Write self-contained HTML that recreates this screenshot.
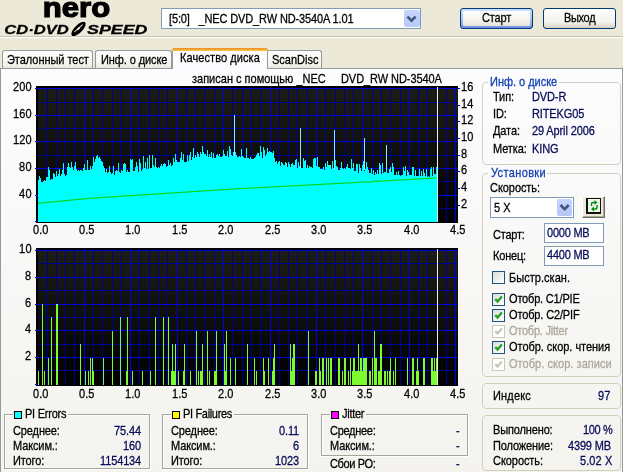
<!DOCTYPE html>
<html lang="ru"><head><meta charset="utf-8"><title>Nero CD-DVD Speed</title>
<style>
html,body{margin:0;padding:0;background:#ece9d8;}
body{width:623px;height:472px;overflow:hidden;font-family:"Liberation Sans",sans-serif;font-size:11px;color:#000;}
#win{position:relative;width:623px;height:472px;overflow:hidden;background:#ece9d8;}
.abs{position:absolute;}
.t{position:absolute;white-space:nowrap;line-height:13px;height:13px;font-size:11px;transform:scaleY(1.1);transform-origin:0 10.3px;will-change:transform;-webkit-text-stroke:0.25px currentColor;}
.nv{color:#080c58;}
.bl{color:#1440b4;}
.gy{color:#aca899;}
#page{position:absolute;left:0px;top:68px;width:621px;height:410px;border:1px solid #919b9c;background:linear-gradient(#fcfcfe,#f4f3ee);}
.tab{position:absolute;top:50px;height:18px;border:1px solid #919b9c;border-bottom:none;border-radius:3px 3px 0 0;background:linear-gradient(#ffffff,#f3f3ec 80%,#e8e7dc);box-sizing:border-box;}
.tab.act{top:48px;height:21px;background:#fcfcfe;border-top:none;}
.tab.act:before{content:"";position:absolute;left:-1px;right:-1px;top:0;height:3px;border-radius:3px 3px 0 0;background:linear-gradient(#e68b2c,#ffc73c);}
.gb{position:absolute;border:1px solid #d0d0bf;border-radius:4px;box-sizing:border-box;}
.gbt{position:absolute;background:#f9f9fa;padding:0 2px;}
.eb{position:absolute;border:1px solid #a5a59a;box-sizing:border-box;box-shadow:1px 1px 0 #fff, inset 1px 1px 0 #fff;}
.inp{position:absolute;border:1px solid #7f9db9;background:#fff;box-sizing:border-box;}
.btn{position:absolute;box-sizing:border-box;border:1px solid #003c74;border-radius:3px;background:linear-gradient(#ffffff,#f3f2ec 70%,#d6d0c5);}
.cb{position:absolute;width:13px;height:13px;box-sizing:border-box;border:1px solid #1c5180;background:linear-gradient(135deg,#dcdcd7,#fff);}
.cb.dis{border-color:#cac8bb;background:#fff;}
.sq{position:absolute;width:8px;height:8px;box-sizing:border-box;border:1px solid #000;}

</style></head>
<body>
<div id="win">
<!-- logo -->
<svg class="abs" style="left:0;top:0;will-change:transform" width="160" height="40" viewBox="0 0 160 40" font-family="Liberation Sans, sans-serif" font-weight="bold">
<text x="42.8" y="17.3" font-size="27.3" textLength="67.4" lengthAdjust="spacingAndGlyphs" stroke="#000" stroke-width="1.2">nero</text>
<g font-style="italic" font-size="12.8" stroke="#000" stroke-width="0.3">
<text x="4.3" y="33.7" textLength="64.5" lengthAdjust="spacingAndGlyphs">CD·DVD</text>
<text x="87" y="33.7" textLength="60.5" lengthAdjust="spacingAndGlyphs">SPEED</text>
</g>
<ellipse cx="78.5" cy="28.9" rx="9.4" ry="3.9" transform="rotate(-45 78.5 28.9)" fill="#000"/>
<path d="M74.2 32.2 L82.6 24.6" stroke="#d8d5c6" stroke-width="1.1" fill="none"/>
<ellipse cx="78.6" cy="28.6" rx="2" ry="0.9" transform="rotate(-45 78.6 28.6)" fill="#ece9d8"/>
</svg>
<!-- top controls -->
<div class="inp" style="left:161px;top:8px;width:260px;height:21px;"></div>

<div class="abs" style="left:404px;top:10px;width:16px;height:17px;background:linear-gradient(#c6d5fd,#b9cafa);border-radius:2px;"></div>
<svg class="abs" style="left:404px;top:10px" width="16" height="17"><path d="M3.4 6.6 L7.5 10.7 L11.6 6.6" fill="none" stroke="#435782" stroke-width="2.7"/></svg>
<div class="btn" style="left:460px;top:8px;width:73px;height:21px;background:linear-gradient(#cfe0ff,#a6bdf3 60%,#6f8bea);"></div>
<div class="abs" style="left:463px;top:11px;width:67px;height:15px;border-radius:1px;background:linear-gradient(#ffffff,#f4f3ee 60%,#e6e3d8);"></div>

<div class="btn" style="left:543px;top:8px;width:73px;height:21px;"></div>

<div class="abs" style="left:0;top:36px;width:623px;height:1px;background:#c5c2b2;"></div>
<div class="abs" style="left:0;top:37px;width:623px;height:1px;background:#fff;"></div>
<!-- tab page -->
<div id="page"></div>
<div class="tab" style="left:2px;width:91px;"></div>
<div class="tab" style="left:95px;width:77px;"></div>
<div class="tab" style="left:266px;width:56px;"></div>
<div class="tab act" style="left:172px;width:96px;"></div>





<svg class="abs" style="left:0;top:0" width="623" height="472" viewBox="0 0 623 472">
<defs><linearGradient id="g1" x1="0" y1="0" x2="0" y2="1"><stop offset="0" stop-color="#1d1d18"/><stop offset="1" stop-color="#000"/></linearGradient></defs>
<rect x="36" y="86" width="422" height="137" fill="#000"/>
<rect x="38" y="88" width="420" height="134" fill="url(#g1)"/>
<path d="M47.5,88V222M56.5,88V222M65.5,88V222M74.5,88V222M93.5,88V222M102.5,88V222M112.5,88V222M121.5,88V222M139.5,88V222M149.5,88V222M158.5,88V222M167.5,88V222M186.5,88V222M195.5,88V222M204.5,88V222M214.5,88V222M232.5,88V222M242.5,88V222M251.5,88V222M260.5,88V222M279.5,88V222M288.5,88V222M297.5,88V222M307.5,88V222M325.5,88V222M335.5,88V222M344.5,88V222M353.5,88V222M372.5,88V222M381.5,88V222M390.5,88V222M400.5,88V222M418.5,88V222M427.5,88V222M437.5,88V222M446.5,88V222M38,102.5H458M38,128.5H458M38,155.5H458M38,181.5H458M38,208.5H458" stroke="#000090" stroke-width="1" fill="none"/>
<path d="M84.5,88V222M130.5,88V222M177.5,88V222M223.5,88V222M270.5,88V222M316.5,88V222M362.5,88V222M409.5,88V222M455.5,88V222M38,88.5H458M38,115.5H458M38,141.5H458M38,168.5H458M38,195.5H458" stroke="#0000dc" stroke-width="1" fill="none"/>
<rect x="234" y="115" width="1" height="55" fill="#8ef"/><rect x="300" y="128" width="1" height="42" fill="#8ef"/><rect x="334" y="130" width="1" height="40" fill="#8ef"/><rect x="364" y="138" width="1" height="32" fill="#8ef"/><rect x="386" y="145" width="1" height="25" fill="#8ef"/>
<path d="M38,222.2V180h1V176h1V178h1V182h1V182h1V181h1V180h1V181h1V177h1V177h1V167h1V170h1V180h1V179h1V179h1V173h1V174h1V177h1V171h1V176h1V174h1V169h1V176h1V174h1V170h1V163h1V174h1V176h1V175h1V167h1V163h1V167h1V168h1V162h1V167h1V170h1V166h1V162h1V169h1V171h1V170h1V171h1V170h1V170h1V171h1V168h1V164h1V170h1V170h1V160h1V170h1V170h1V166h1V169h1V166h1V157h1V162h1V159h1V156h1V155h1V158h1V157h1V159h1V161h1V162h1V166h1V168h1V172h1V169h1V173h1V172h1V166h1V172h1V174h1V173h1V166h1V175h1V171h1V170h1V171h1V163h1V172h1V173h1V170h1V171h1V164h1V163h1V164h1V172h1V170h1V172h1V172h1V159h1V160h1V159h1V171h1V171h1V167h1V162h1V166h1V172h1V159h1V163h1V171h1V169h1V156h1V168h1V162h1V169h1V158h1V169h1V155h1V168h1V168h1V155h1V165h1V167h1V158h1V167h1V168h1V167h1V168h1V166h1V164h1V166h1V164h1V163h1V164h1V167h1V166h1V160h1V165h1V163h1V166h1V165h1V158h1V162h1V154h1V160h1V162h1V162h1V162h1V158h1V152h1V160h1V154h1V162h1V162h1V162h1V155h1V161h1V155h1V152h1V160h1V157h1V148h1V158h1V155h1V157h1V152h1V154h1V157h1V152h1V154h1V146h1V152h1V154h1V154h1V156h1V150h1V157h1V154h1V157h1V152h1V158h1V153h1V158h1V158h1V155h1V154h1V156h1V154h1V157h1V157h1V156h1V150h1V154h1V156h1V156h1V151h1V157h1V146h1V149h1V155h1V156h1V152h1V157h1V152h1V155h1V157h1V157h1V156h1V157h1V149h1V156h1V157h1V158h1V158h1V148h1V158h1V158h1V159h1V157h1V159h1V159h1V159h1V158h1V157h1V155h1V153h1V153h1V156h1V146h1V152h1V158h1V147h1V150h1V156h1V154h1V148h1V152h1V151h1V152h1V152h1V153h1V151h1V158h1V162h1V161h1V164h1V162h1V161h1V166h1V162h1V163h1V165h1V165h1V162h1V163h1V167h1V162h1V164h1V167h1V164h1V163h1V165h1V165h1V160h1V159h1V168h1V162h1V166h1V168h1V168h1V168h1V158h1V161h1V160h1V168h1V165h1V168h1V166h1V167h1V167h1V168h1V159h1V158h1V158h1V166h1V157h1V167h1V167h1V169h1V169h1V169h1V167h1V170h1V163h1V167h1V161h1V165h1V165h1V165h1V169h1V161h1V168h1V170h1V160h1V166h1V167h1V170h1V170h1V168h1V162h1V168h1V169h1V168h1V169h1V167h1V164h1V168h1V168h1V169h1V159h1V168h1V163h1V171h1V171h1V164h1V164h1V173h1V164h1V168h1V171h1V165h1V161h1V171h1V169h1V162h1V167h1V170h1V173h1V173h1V168h1V174h1V170h1V175h1V172h1V174h1V170h1V174h1V163h1V165h1V174h1V163h1V173h1V172h1V172h1V170h1V173h1V173h1V169h1V167h1V172h1V163h1V167h1V175h1V175h1V172h1V175h1V171h1V175h1V176h1V175h1V175h1V167h1V171h1V166h1V176h1V170h1V172h1V175h1V175h1V175h1V167h1V167h1V176h1V170h1V176h1V176h1V176h1V169h1V176h1V171h1V176h1V169h1V173h1V176h1V169h1V177h1V176h1V177h1V169h1V167h1V176h1V167h1V174h1V174h1V167h1V222.2Z" fill="#00ffff"/>
<path d="M38,203.3 L39,203.2 L40,203.1 L41,203.0 L42,202.9 L43,202.8 L44,202.7 L45,202.6 L46,202.5 L47,202.4 L48,202.3 L49,202.2 L50,202.1 L51,202.1 L52,202.0 L53,201.9 L54,201.8 L55,201.7 L56,201.6 L57,201.5 L58,201.4 L59,201.3 L60,201.2 L61,201.1 L62,201.0 L63,200.9 L64,200.8 L65,200.7 L66,200.6 L67,200.5 L68,200.4 L69,200.3 L70,200.2 L71,200.1 L72,200.0 L73,199.9 L74,199.8 L75,199.7 L76,199.6 L77,199.6 L78,199.5 L79,199.4 L80,199.3 L81,199.2 L82,199.1 L83,199.0 L84,198.9 L85,198.8 L86,198.7 L87,198.6 L88,198.5 L89,198.4 L90,198.3 L91,198.2 L92,198.2 L93,198.1 L94,198.0 L95,198.0 L96,197.9 L97,197.8 L98,197.8 L99,197.7 L100,197.6 L101,197.6 L102,197.5 L103,197.4 L104,197.4 L105,197.3 L106,197.2 L107,197.2 L108,197.1 L109,197.1 L110,197.0 L111,196.9 L112,196.9 L113,196.8 L114,196.7 L115,196.7 L116,196.6 L117,196.5 L118,196.5 L119,196.4 L120,196.3 L121,196.3 L122,196.2 L123,196.1 L124,196.1 L125,196.0 L126,195.9 L127,195.9 L128,195.8 L129,195.7 L130,195.7 L131,195.6 L132,195.5 L133,195.5 L134,195.4 L135,195.4 L136,195.3 L137,195.2 L138,195.2 L139,195.1 L140,195.0 L141,195.0 L142,194.9 L143,194.8 L144,194.8 L145,194.7 L146,194.6 L147,194.6 L148,194.5 L149,194.5 L150,194.4 L151,194.3 L152,194.3 L153,194.2 L154,194.1 L155,194.1 L156,194.0 L157,193.9 L158,193.9 L159,193.8 L160,193.7 L161,193.7 L162,193.6 L163,193.5 L164,193.5 L165,193.4 L166,193.4 L167,193.3 L168,193.2 L169,193.2 L170,193.1 L171,193.0 L172,193.0 L173,192.9 L174,192.8 L175,192.8 L176,192.7 L177,192.6 L178,192.6 L179,192.5 L180,192.4 L181,192.4 L182,192.3 L183,192.3 L184,192.2 L185,192.1 L186,192.1 L187,192.0 L188,191.9 L189,191.9 L190,191.8 L191,191.7 L192,191.7 L193,191.6 L194,191.5 L195,191.5 L196,191.4 L197,191.4 L198,191.3 L199,191.2 L200,191.2 L201,191.1 L202,191.0 L203,191.0 L204,190.9 L205,190.8 L206,190.8 L207,190.7 L208,190.6 L209,190.6 L210,190.5 L211,190.4 L212,190.4 L213,190.3 L214,190.3 L215,190.2 L216,190.1 L217,190.1 L218,190.0 L219,189.9 L220,189.9 L221,189.8 L222,189.7 L223,189.7 L224,189.6 L225,189.5 L226,189.5 L227,189.4 L228,189.4 L229,189.3 L230,189.2 L231,189.2 L232,189.1 L233,189.0 L234,189.0 L235,188.9 L236,188.8 L237,188.8 L238,188.7 L239,188.7 L240,188.6 L241,188.6 L242,188.5 L243,188.5 L244,188.4 L245,188.4 L246,188.3 L247,188.3 L248,188.2 L249,188.2 L250,188.1 L251,188.1 L252,188.0 L253,188.0 L254,187.9 L255,187.8 L256,187.8 L257,187.7 L258,187.7 L259,187.6 L260,187.6 L261,187.5 L262,187.5 L263,187.4 L264,187.4 L265,187.3 L266,187.3 L267,187.2 L268,187.2 L269,187.1 L270,187.1 L271,187.0 L272,186.9 L273,186.9 L274,186.8 L275,186.8 L276,186.7 L277,186.7 L278,186.6 L279,186.6 L280,186.5 L281,186.5 L282,186.4 L283,186.4 L284,186.3 L285,186.3 L286,186.2 L287,186.2 L288,186.1 L289,186.1 L290,186.0 L291,185.9 L292,185.9 L293,185.8 L294,185.8 L295,185.7 L296,185.7 L297,185.6 L298,185.6 L299,185.5 L300,185.5 L301,185.4 L302,185.4 L303,185.3 L304,185.3 L305,185.2 L306,185.2 L307,185.1 L308,185.1 L309,185.0 L310,184.9 L311,184.9 L312,184.8 L313,184.8 L314,184.7 L315,184.7 L316,184.6 L317,184.6 L318,184.5 L319,184.5 L320,184.4 L321,184.4 L322,184.3 L323,184.3 L324,184.2 L325,184.2 L326,184.1 L327,184.0 L328,184.0 L329,183.9 L330,183.9 L331,183.8 L332,183.8 L333,183.7 L334,183.7 L335,183.6 L336,183.6 L337,183.5 L338,183.5 L339,183.4 L340,183.4 L341,183.3 L342,183.3 L343,183.2 L344,183.2 L345,183.1 L346,183.0 L347,183.0 L348,182.9 L349,182.9 L350,182.8 L351,182.8 L352,182.7 L353,182.7 L354,182.6 L355,182.5 L356,182.5 L357,182.4 L358,182.4 L359,182.3 L360,182.3 L361,182.2 L362,182.1 L363,182.1 L364,182.0 L365,182.0 L366,181.9 L367,181.9 L368,182.2 L369,182.1 L370,182.2 L371,182.0 L372,181.7 L373,181.3 L374,181.2 L375,181.2 L376,181.8 L377,180.7 L378,181.3 L379,181.2 L380,181.1 L381,181.1 L382,181.0 L383,181.0 L384,180.9 L385,180.9 L386,180.8 L387,180.7 L388,180.7 L389,180.6 L390,180.6 L391,180.5 L392,180.5 L393,180.4 L394,180.4 L395,180.3 L396,180.2 L397,180.2 L398,180.1 L399,180.1 L400,180.0 L401,180.0 L402,179.9 L403,179.8 L404,179.8 L405,179.7 L406,179.7 L407,179.6 L408,179.6 L409,179.5 L410,179.5 L411,179.4 L412,179.3 L413,179.3 L414,179.2 L415,179.2 L416,179.1 L417,179.1 L418,179.0 L419,179.0 L420,178.9 L421,178.8 L422,178.8 L423,178.7 L424,178.7 L425,178.6 L426,178.6 L427,178.5 L428,178.4 L429,178.4 L430,178.3 L431,178.3 L432,178.2 L433,178.2 L434,178.1 L435,178.1 L436,178.0" fill="none" stroke="#00d820" stroke-width="1.2"/>
<rect x="437" y="87" width="1" height="135" fill="#f0f0e8"/>
<rect x="36" y="222" width="422" height="1" fill="#000"/>
<path d="M35,88.5H38M35,115.5H38M35,141.5H38M35,168.5H38M35,195.5H38M35,221.5H38" stroke="#0000dc" stroke-width="1" fill="none"/>
<path d="M457,88.5H460M457,105.5H460M457,121.5H460M457,138.5H460M457,155.5H460M457,171.5H460M457,188.5H460M457,205.5H460" stroke="#0000dc" stroke-width="1" fill="none"/>
<defs><linearGradient id="g2" x1="0" y1="0" x2="0" y2="1"><stop offset="0" stop-color="#1d1d18"/><stop offset="1" stop-color="#000"/></linearGradient></defs>
<rect x="36" y="248" width="422" height="138" fill="#000"/>
<rect x="38" y="250" width="420" height="135" fill="url(#g2)"/>
<path d="M47.5,250V385M56.5,250V385M65.5,250V385M74.5,250V385M93.5,250V385M102.5,250V385M112.5,250V385M121.5,250V385M139.5,250V385M149.5,250V385M158.5,250V385M167.5,250V385M186.5,250V385M195.5,250V385M204.5,250V385M214.5,250V385M232.5,250V385M242.5,250V385M251.5,250V385M260.5,250V385M279.5,250V385M288.5,250V385M297.5,250V385M307.5,250V385M325.5,250V385M335.5,250V385M344.5,250V385M353.5,250V385M372.5,250V385M381.5,250V385M390.5,250V385M400.5,250V385M418.5,250V385M427.5,250V385M437.5,250V385M446.5,250V385M38,263.5H458M38,290.5H458M38,317.5H458M38,344.5H458M38,370.5H458" stroke="#000090" stroke-width="1" fill="none"/>
<path d="M84.5,250V385M130.5,250V385M177.5,250V385M223.5,250V385M270.5,250V385M316.5,250V385M362.5,250V385M409.5,250V385M455.5,250V385M38,250.5H458M38,277.5H458M38,304.5H458M38,330.5H458M38,357.5H458" stroke="#0000dc" stroke-width="1" fill="none"/>
<path d="M38,385.0V371h1V385.0zM42,385.0V304h1V385.0zM44,385.0V371h1V385.0zM48,385.0V358h1V385.0zM51,385.0V317h1V385.0zM56,385.0V304h2V385.0zM80,385.0V344h1V385.0zM85,385.0V371h1V385.0zM88,385.0V371h1V385.0zM90,385.0V358h1V385.0zM92,385.0V358h1V385.0zM93,385.0V371h1V385.0zM103,385.0V358h1V385.0zM112,385.0V331h1V385.0zM120,385.0V317h1V385.0zM127,385.0V317h1V385.0zM126,385.0V371h2V385.0zM132,385.0V371h1V385.0zM142,385.0V371h1V385.0zM150,385.0V371h1V385.0zM155,385.0V317h1V385.0zM163,385.0V317h1V385.0zM168,385.0V317h1V385.0zM171,385.0V371h4V385.0zM172,385.0V358h1V385.0zM172,385.0V344h1V385.0zM175,385.0V344h1V385.0zM178,385.0V371h1V385.0zM184,385.0V344h1V385.0zM183,385.0V371h2V385.0zM190,385.0V371h1V385.0zM196,385.0V331h1V385.0zM198,385.0V371h1V385.0zM202,385.0V344h1V385.0zM200,385.0V371h3V385.0zM207,385.0V331h1V385.0zM209,385.0V371h1V385.0zM214,385.0V371h2V385.0zM216,385.0V331h1V385.0zM224,385.0V344h1V385.0zM224,385.0V371h2V385.0zM226,385.0V331h1V385.0zM230,385.0V358h1V385.0zM235,385.0V358h1V385.0zM247,385.0V344h1V385.0zM254,385.0V358h1V385.0zM256,385.0V371h1V385.0zM263,385.0V358h1V385.0zM263,385.0V371h2V385.0zM268,385.0V358h1V385.0zM272,385.0V371h3V385.0zM273,385.0V358h1V385.0zM274,385.0V344h1V385.0zM290,385.0V344h1V385.0zM293,385.0V344h2V385.0zM290,385.0V371h5V385.0zM292,385.0V358h3V385.0zM308,385.0V331h1V385.0zM315,385.0V371h2V385.0zM319,385.0V358h1V385.0zM320,385.0V371h1V385.0zM322,385.0V358h2V385.0zM326,385.0V358h1V385.0zM328,385.0V358h1V385.0zM330,385.0V358h2V385.0zM338,385.0V358h2V385.0zM342,385.0V371h1V385.0zM344,385.0V358h2V385.0zM348,385.0V371h1V385.0zM350,385.0V358h1V385.0zM352,385.0V371h3V385.0zM353,385.0V358h2V385.0zM358,385.0V344h1V385.0zM357,385.0V371h3V385.0zM360,385.0V358h2V385.0zM363,385.0V358h2V385.0zM362,385.0V371h3V385.0zM355,385.0V371h2V385.0zM361,385.0V371h5V385.0zM365,385.0V358h2V385.0zM369,385.0V371h2V385.0zM372,385.0V358h1V385.0zM374,385.0V331h1V385.0zM374,385.0V371h3V385.0zM375,385.0V358h2V385.0zM378,385.0V371h4V385.0zM380,385.0V344h2V385.0zM384,385.0V371h2V385.0zM387,385.0V371h1V385.0zM390,385.0V358h1V385.0zM389,385.0V371h2V385.0zM393,385.0V371h1V385.0zM395,385.0V358h1V385.0zM407,385.0V358h1V385.0zM412,385.0V358h2V385.0zM417,385.0V358h1V385.0zM416,385.0V371h3V385.0zM423,385.0V358h2V385.0zM431,385.0V371h6V385.0zM431,385.0V358h2V385.0zM434,385.0V358h1V385.0zM436,385.0V358h1V385.0z" fill="#7cfc30"/>
<rect x="437" y="249" width="1" height="136" fill="#f0f0e8"/>
<rect x="36" y="385" width="422" height="1" fill="#000"/>
<path d="M35,250.5H38M35,277.5H38M35,304.5H38M35,330.5H38M35,357.5H38M35,384.5H38" stroke="#0000dc" stroke-width="1" fill="none"/>
</svg>

<!-- right panel -->
<div class="gb" style="left:482px;top:82px;width:139px;height:83px;"></div>
<div class="abs" style="left:488px;top:81px;width:71px;height:3px;background:#fcfcfd;"></div>






<div class="gb" style="left:482px;top:173px;width:139px;height:204px;"></div>
<div class="abs" style="left:488px;top:172px;width:59px;height:3px;background:#fafaf9;"></div>


<div class="inp" style="left:490px;top:197px;width:84px;height:21px;"></div>

<div class="abs" style="left:557px;top:199px;width:15px;height:17px;background:linear-gradient(#c8d6fd,#b4c6f8);border-radius:2px;"></div>
<svg class="abs" style="left:557px;top:199px" width="15" height="17"><path d="M3.5 6 L7.6 10.1 L11.7 6" fill="none" stroke="#435782" stroke-width="2.7"/></svg>
<div class="abs" style="left:582px;top:196px;width:23px;height:22px;box-sizing:border-box;background:#ece9d8;border:1px solid;border-color:#fff #716f64 #716f64 #fff;box-shadow:inset -1px -1px 0 #aca899;"></div>
<div class="abs" style="left:586px;top:198px;width:15px;height:16px;box-sizing:border-box;background:#eef6ee;border:1px solid #111;border-left-width:2px;border-bottom-width:2px;"></div>
<svg class="abs" style="left:586px;top:198px" width="15" height="16" viewBox="0 0 15 16"><path d="M5.5 8 V6 Q5.5 4.5 7 4.5 H9" fill="none" stroke="#0a8a0a" stroke-width="1.5"/><path d="M8.5 2 L11.5 4.5 L8.5 7Z" fill="#0a8a0a"/><path d="M11 7 V9.5 Q11 11 9.5 11 H7.5" fill="none" stroke="#0a8a0a" stroke-width="1.5"/><path d="M8 8.5 L5 11 L8 13.5Z" fill="#0a8a0a"/></svg>

<div class="inp" style="left:544px;top:223px;width:60px;height:20px;"></div>


<div class="inp" style="left:544px;top:246px;width:60px;height:20px;"></div>


<div class="cb" style="left:492px;top:271px;"></div>
<div class="cb" style="left:492px;top:293px;"></div>
<div class="cb" style="left:492px;top:309px;"></div>
<div class="cb dis" style="left:492px;top:325px;"></div>
<div class="cb" style="left:492px;top:341px;"></div>
<div class="cb dis" style="left:492px;top:358px;"></div>
<svg class="abs" style="left:492px;top:293px" width="13" height="80" viewBox="0 0 13 80">
<g fill="none" stroke-width="2.3"><path d="M3.3 6 L5.6 8.6 L9.8 3.6" stroke="#21a121"/><path d="M3.3 22 L5.6 24.6 L9.8 19.6" stroke="#21a121"/><path d="M3.3 38 L5.6 40.6 L9.8 35.6" stroke="#c8c6b8"/><path d="M3.3 54 L5.6 56.6 L9.8 51.6" stroke="#21a121"/><path d="M3.3 71 L5.6 73.6 L9.8 68.6" stroke="#c8c6b8"/></g></svg>

<div class="gb" style="left:482px;top:383px;width:139px;height:26px;"></div>

<div class="gb" style="left:482px;top:415px;width:139px;height:56px;"></div>




<!-- bottom stats -->
<div class="eb" style="left:4px;top:414px;width:146px;height:55px;"></div>
<div class="abs" style="left:13px;top:409px;width:55px;height:10px;background:#f5f4ef;"></div>
<div class="sq" style="left:14px;top:411px;background:#00ffff;"></div>





<div class="eb" style="left:162px;top:414px;width:146px;height:55px;"></div>
<div class="abs" style="left:171px;top:409px;width:63px;height:10px;background:#f5f4ef;"></div>
<div class="sq" style="left:172px;top:411px;background:#ffff00;"></div>





<div class="eb" style="left:321px;top:414px;width:147px;height:42px;"></div>
<div class="abs" style="left:330px;top:409px;width:36px;height:10px;background:#f5f4ef;"></div>
<div class="sq" style="left:331px;top:411px;background:#ff00ff;"></div>





<span class="t" style="left:168.5px;top:13px;letter-spacing:-0.13px;">[5:0]   _NEC DVD_RW ND-3540A 1.01</span>
<span class="t" style="left:481.7px;top:12px;letter-spacing:-0.12px;">Старт</span>
<span class="t" style="left:563.7px;top:12px;letter-spacing:-0.34px;">Выход</span>
<span class="t" style="left:7.3px;top:54px;letter-spacing:-0.04px;">Эталонный тест</span>
<span class="t" style="left:101.2px;top:54px;letter-spacing:-0.09px;">Инф. о диске</span>
<span class="t" style="left:180.2px;top:52px;letter-spacing:0.08px;">Качество диска</span>
<span class="t" style="left:272.4px;top:54px;letter-spacing:-0.01px;">ScanDisc</span>
<span class="t" style="left:191.5px;top:73px;">записан с помощью _NEC</span>
<span class="t" style="left:340.7px;top:73px;letter-spacing:-0.07px;">DVD_RW ND-3540A</span>
<span class="t" style="left:13.3px;top:81px;letter-spacing:0.15px;">200</span>
<span class="t" style="left:13.3px;top:108px;letter-spacing:0.15px;">160</span>
<span class="t" style="left:13.3px;top:134px;letter-spacing:0.15px;">120</span>
<span class="t" style="left:19.3px;top:161px;letter-spacing:0.28px;">80</span>
<span class="t" style="left:19.3px;top:188px;letter-spacing:0.28px;">40</span>
<span class="t" style="left:460.7px;top:198px;letter-spacing:0.28px;">2</span>
<span class="t" style="left:460.7px;top:181px;letter-spacing:0.28px;">4</span>
<span class="t" style="left:460.7px;top:164px;letter-spacing:0.28px;">6</span>
<span class="t" style="left:460.7px;top:148px;letter-spacing:0.28px;">8</span>
<span class="t" style="left:460.7px;top:131px;letter-spacing:0.08px;">10</span>
<span class="t" style="left:460.7px;top:114px;letter-spacing:0.08px;">12</span>
<span class="t" style="left:460.7px;top:98px;letter-spacing:0.08px;">14</span>
<span class="t" style="left:460.7px;top:81px;letter-spacing:0.08px;">16</span>
<span class="t" style="left:32.5px;top:224px;letter-spacing:0.03px;">0.0</span>
<span class="t" style="left:32.5px;top:388px;letter-spacing:0.03px;">0.0</span>
<span class="t" style="left:78.9px;top:224px;letter-spacing:0.03px;">0.5</span>
<span class="t" style="left:78.9px;top:388px;letter-spacing:0.03px;">0.5</span>
<span class="t" style="left:125.3px;top:224px;letter-spacing:0.03px;">1.0</span>
<span class="t" style="left:125.3px;top:388px;letter-spacing:0.03px;">1.0</span>
<span class="t" style="left:171.7px;top:224px;letter-spacing:0.03px;">1.5</span>
<span class="t" style="left:171.7px;top:388px;letter-spacing:0.03px;">1.5</span>
<span class="t" style="left:218.1px;top:224px;letter-spacing:0.03px;">2.0</span>
<span class="t" style="left:218.1px;top:388px;letter-spacing:0.03px;">2.0</span>
<span class="t" style="left:264.5px;top:224px;letter-spacing:0.03px;">2.5</span>
<span class="t" style="left:264.5px;top:388px;letter-spacing:0.03px;">2.5</span>
<span class="t" style="left:310.9px;top:224px;letter-spacing:0.03px;">3.0</span>
<span class="t" style="left:310.9px;top:388px;letter-spacing:0.03px;">3.0</span>
<span class="t" style="left:357.3px;top:224px;letter-spacing:0.03px;">3.5</span>
<span class="t" style="left:357.3px;top:388px;letter-spacing:0.03px;">3.5</span>
<span class="t" style="left:403.7px;top:224px;letter-spacing:0.03px;">4.0</span>
<span class="t" style="left:403.7px;top:388px;letter-spacing:0.03px;">4.0</span>
<span class="t" style="left:450.1px;top:224px;letter-spacing:0.03px;">4.5</span>
<span class="t" style="left:450.1px;top:388px;letter-spacing:0.03px;">4.5</span>
<span class="t" style="left:19.3px;top:243px;letter-spacing:0.28px;">10</span>
<span class="t" style="left:25.3px;top:270px;letter-spacing:0.50px;">8</span>
<span class="t" style="left:25.3px;top:297px;letter-spacing:0.50px;">6</span>
<span class="t" style="left:25.3px;top:323px;letter-spacing:0.50px;">4</span>
<span class="t" style="left:25.3px;top:350px;letter-spacing:0.50px;">2</span>
<span class="t bl" style="left:490.3px;top:76px;letter-spacing:-0.02px;">Инф. о диске</span>
<span class="t" style="left:492.5px;top:91px;letter-spacing:-0.12px;">Тип:</span>
<span class="t nv" style="left:532.4px;top:91px;letter-spacing:-0.12px;">DVD-R</span>
<span class="t" style="left:492.5px;top:108px;letter-spacing:-0.12px;">ID:</span>
<span class="t nv" style="left:532.4px;top:108px;letter-spacing:-0.12px;">RITEKG05</span>
<span class="t" style="left:492.5px;top:125px;letter-spacing:-0.12px;">Дата:</span>
<span class="t nv" style="left:532.4px;top:125px;letter-spacing:-0.12px;">29 April 2006</span>
<span class="t" style="left:492.5px;top:143px;letter-spacing:-0.12px;">Метка:</span>
<span class="t nv" style="left:532.4px;top:143px;letter-spacing:-0.12px;">KING</span>
<span class="t bl" style="left:490.5px;top:167px;letter-spacing:0.36px;">Установки</span>
<span class="t" style="left:489.5px;top:182px;letter-spacing:-0.06px;">Скорость:</span>
<span class="t" style="left:494.0px;top:202px;letter-spacing:0.06px;">5 X</span>
<span class="t" style="left:492.5px;top:229px;letter-spacing:-0.21px;">Старт:</span>
<span class="t nv" style="left:547.1px;top:227px;letter-spacing:-0.23px;">0000 MB</span>
<span class="t" style="left:492.5px;top:250px;letter-spacing:-0.18px;">Конец:</span>
<span class="t nv" style="left:547.1px;top:249px;letter-spacing:-0.23px;">4400 MB</span>
<span class="t" style="left:508.7px;top:272px;letter-spacing:0.04px;">Быстр.скан.</span>
<span class="t" style="left:508.7px;top:293px;letter-spacing:-0.18px;">Отобр. C1/PIE</span>
<span class="t" style="left:508.7px;top:309px;letter-spacing:-0.14px;">Отобр. C2/PIF</span>
<span class="t gy" style="left:508.7px;top:325px;letter-spacing:-0.24px;">Отобр. Jitter</span>
<span class="t" style="left:508.7px;top:341px;letter-spacing:-0.04px;">Отобр. скор. чтения</span>
<span class="t gy" style="left:508.7px;top:358px;letter-spacing:0.05px;">Отобр. скор. записи</span>
<span class="t" style="left:492.5px;top:390px;letter-spacing:0.17px;">Индекс</span>
<span class="t nv" style="left:598.2px;top:390px;letter-spacing:0.22px;">97</span>
<span class="t" style="left:492.5px;top:424px;letter-spacing:-0.14px;">Выполнено:</span>
<span class="t nv" style="left:582.7px;top:424px;letter-spacing:-0.36px;">100 %</span>
<span class="t" style="left:492.5px;top:440px;letter-spacing:-0.12px;">Положение:</span>
<span class="t nv" style="left:568.0px;top:440px;letter-spacing:-0.16px;">4399 MB</span>
<span class="t" style="left:492.5px;top:455px;letter-spacing:-0.06px;">Скорость:</span>
<span class="t nv" style="left:580.4px;top:455px;letter-spacing:0.10px;">5.02 X</span>
<span class="t" style="left:24.7px;top:408px;letter-spacing:-0.23px;">PI Errors</span>
<span class="t" style="left:12.7px;top:425px;letter-spacing:-0.12px;">Среднее:</span>
<span class="t" style="left:12.7px;top:440px;letter-spacing:-0.12px;">Максим.:</span>
<span class="t" style="left:12.7px;top:455px;letter-spacing:-0.12px;">Итого:</span>
<span class="t nv" style="left:113.7px;top:425px;letter-spacing:-0.09px;">75.44</span>
<span class="t nv" style="left:122.6px;top:440px;letter-spacing:-0.12px;">160</span>
<span class="t nv" style="left:99.7px;top:455px;letter-spacing:-0.13px;">1154134</span>
<span class="t" style="left:183.2px;top:408px;letter-spacing:-0.33px;">PI Failures</span>
<span class="t" style="left:171.1px;top:425px;letter-spacing:-0.12px;">Среднее:</span>
<span class="t" style="left:171.1px;top:440px;letter-spacing:-0.12px;">Максим.:</span>
<span class="t" style="left:171.1px;top:455px;letter-spacing:-0.12px;">Итого:</span>
<span class="t nv" style="left:278.7px;top:425px;letter-spacing:-0.12px;">0.11</span>
<span class="t nv" style="left:292.8px;top:440px;letter-spacing:-0.12px;">6</span>
<span class="t nv" style="left:274.8px;top:455px;letter-spacing:-0.12px;">1023</span>
<span class="t" style="left:342.2px;top:408px;letter-spacing:-0.26px;">Jitter</span>
<span class="t" style="left:330.0px;top:425px;letter-spacing:-0.28px;">Среднее:</span>
<span class="t" style="left:330.0px;top:440px;letter-spacing:-0.12px;">Максим.:</span>
<span class="t" style="left:330.0px;top:458px;letter-spacing:-0.38px;">Сбои PO:</span>
<span class="t nv" style="left:455.7px;top:425px;letter-spacing:-0.12px;">-</span>
<span class="t nv" style="left:455.7px;top:440px;letter-spacing:-0.12px;">-</span>
<span class="t nv" style="left:455.7px;top:458px;letter-spacing:-0.12px;">-</span>
</div>
</body></html>
